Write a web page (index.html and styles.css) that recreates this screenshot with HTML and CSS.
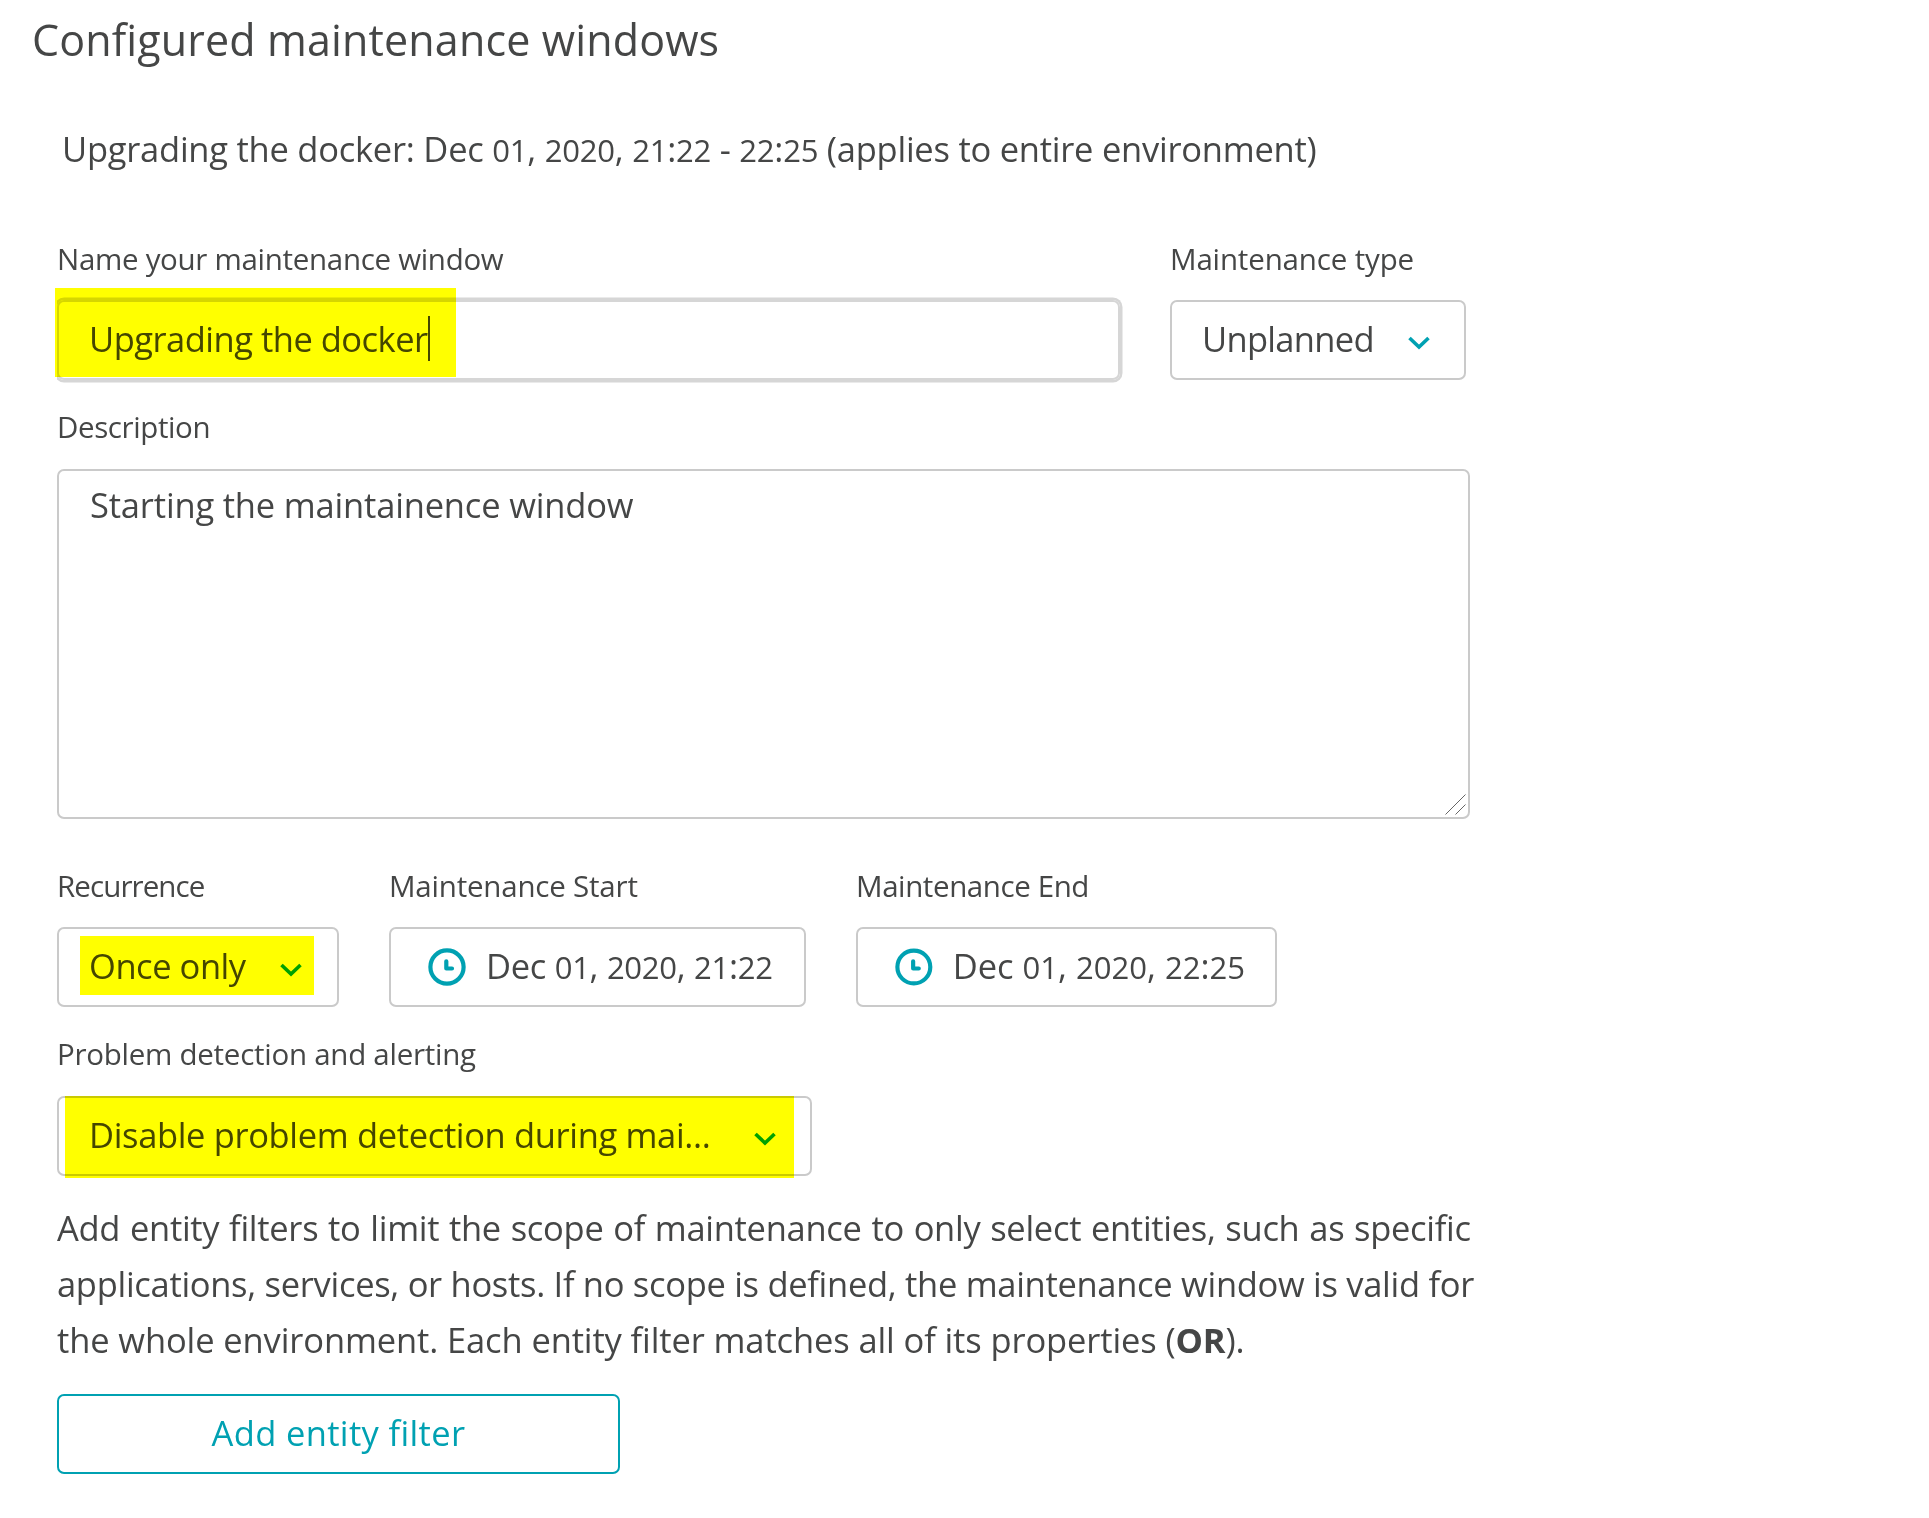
FILE: index.html
```html
<!DOCTYPE html>
<html lang="en">
<head>
<meta charset="utf-8">
<title>Configured maintenance windows</title>
<link rel="stylesheet" href="styles.css">
</head>
<body>
<main class="page">
  <h1 class="title">Configured maintenance windows</h1>
  <p class="summary">Upgrading the docker: Dec <span class="num">01</span>, <span class="num">2020</span>, <span class="num">21</span>:<span class="num">22</span> - <span class="num">22</span>:<span class="num">25</span> (applies to entire environment)</p>

  <form class="form">
    <div class="row row-name">
      <div class="field">
        <div class="label label-name">Name your maintenance window</div>
        <div class="box input-name"><span class="text-name">Upgrading the docker</span><i class="caret"></i><i class="mark mark-name"></i></div>
      </div>
      <div class="field">
        <div class="label label-type">Maintenance type</div>
        <div class="box select-type"><span class="text-type">Unplanned</span>
          <svg class="chevron" viewBox="0 0 22 14"><path d="M1.5 2 11 11 20.500 2"/></svg>
        </div>
      </div>
    </div>

    <div class="field field-description">
      <div class="label label-description">Description</div>
      <div class="box area"><span class="text-description">Starting the maintainence window</span>
        <svg class="grip" viewBox="0 0 22 22"><path d="M.5 20.500 20.500.5M10.500 20.500l10-10"/></svg>
      </div>
    </div>

    <div class="row row-time">
      <div class="field">
        <div class="label label-recurrence">Recurrence</div>
        <div class="box select-recurrence"><span class="text-recurrence">Once only</span>
          <svg class="chevron" viewBox="0 0 22 14"><path d="M1.5 2 11 11 20.500 2"/></svg>
          <i class="mark mark-recurrence"></i>
        </div>
      </div>
      <div class="field">
        <div class="label label-start">Maintenance Start</div>
        <div class="box date-start">
          <svg class="clock" viewBox="0 0 38 38"><circle cx="19" cy="19" r="16.600"/><path d="M18.300 13.300v7.200h5.700"/></svg>
          <span class="text-start">Dec <span class="num">01</span>, <span class="num">2020</span>, <span class="num">21</span>:<span class="num">22</span></span>
        </div>
      </div>
      <div class="field">
        <div class="label label-end">Maintenance End</div>
        <div class="box date-end">
          <svg class="clock" viewBox="0 0 38 38"><circle cx="19" cy="19" r="16.600"/><path d="M18.300 13.300v7.200h5.700"/></svg>
          <span class="text-end">Dec <span class="num">01</span>, <span class="num">2020</span>, <span class="num">22</span>:<span class="num">25</span></span>
        </div>
      </div>
    </div>

    <div class="field field-alerting">
      <div class="label label-alerting">Problem detection and alerting</div>
      <div class="box select-alerting"><span class="text-alerting">Disable problem detection during mai...</span>
        <svg class="chevron" viewBox="0 0 22 14"><path d="M1.5 2 11 11 20.500 2"/></svg>
        <i class="mark mark-alerting"></i>
      </div>
    </div>

    <p class="hint"><span class="line-1">Add entity filters to limit the scope of maintenance to only select entities, such as specific</span><br><span class="line-2">applications, services, or hosts. If no scope is defined, the maintenance window is valid for</span><br><span class="line-3">the whole environment. Each entity filter matches all of its properties (<b>OR</b>).</span></p>
    <div class="box add-filter">Add entity filter</div>
  </form>
</main>
</body>
</html>
```
FILE: styles.css
```css
* { box-sizing: border-box; }

body {
  margin: 0;
  background: #fff;
  color: #454646;
  font-family: "Open Sans", "Noto Sans", sans-serif;
  font-size: 34.5px;
  font-variant-ligatures: none;
  white-space: nowrap;
}

.page { padding: 10px 0 0 30px; }

.title {
  margin: 0 0 0 2px;
  font-size: 43px;
  font-weight: 400;
  line-height: 60px;
  letter-spacing: .14px;
}

.summary {
  margin: 54px 0 0 32px;
  line-height: 50px;
  letter-spacing: -.245px;
}

.num { font-size: .9em; }

.form { margin: 64px 0 0 27px; }
.row { display: flex; }
.row-name { gap: 50px; }
.row-time { gap: 50px; margin-top: 47px; }
.field-description, .field-alerting { margin-top: 27px; }

.label {
  height: 61px;
  font-size: 29.5px;
  line-height: 40px;
}
.label-name { letter-spacing: -.3px; }
.label-type { letter-spacing: -.15px; }
.label-description { height: 62px; letter-spacing: -.4px; }
.label-recurrence { letter-spacing: -.9px; }
.label-start { letter-spacing: -.2px; }
.label-end { letter-spacing: -.4px; }
.label-alerting { height: 62px; letter-spacing: -.26px; }

.box {
  position: relative;
  display: flex;
  align-items: center;
  height: 80px;
  padding: 0 30px 3px;
  border: 2px solid #cacaca;
  border-radius: 7px;
}

.input-name {
  width: 1063px;
  border-color: #d6d6d6;
  box-shadow: 0 0 0 2.500px #d6d6d6;
  clip-path: inset(-12px -3px -3px -2px);
}
.input-name::before {
  content: "";
  position: absolute;
  inset: -5px auto -5px -7px;
  width: 5px;
  background: #fff;
}
.text-name { letter-spacing: -.5px; }
.caret { width: 2px; height: 45px; background: #454646; }

.select-type { width: 296px; justify-content: space-between; padding-right: 34px; }
.text-type { letter-spacing: -.7px; }

.area { width: 1413px; height: 350px; align-items: flex-start; padding: 9px 30px 0 31px; }
.text-description { line-height: 50px; letter-spacing: -.18px; }
.grip {
  position: absolute;
  right: 1px;
  bottom: 1px;
  width: 22px;
  height: 22px;
  fill: none;
  stroke: #666;
  stroke-width: 1;
}

.select-recurrence { width: 282px; justify-content: space-between; padding-right: 35px; }
.text-recurrence { letter-spacing: -.45px; }
.date-start { width: 417px; padding-left: 37px; }
.date-end { width: 421px; padding-left: 37px; }
.text-start { letter-spacing: -.3px; }
.text-end { letter-spacing: 0; }

.select-alerting { width: 755px; justify-content: space-between; padding-right: 34px; }
.text-alerting { letter-spacing: -.35px; }

.chevron {
  width: 22px;
  height: 14px;
  margin-top: 8px;
  fill: none;
  stroke: #00a1b2;
  stroke-width: 3.600;
}

.clock {
  width: 38px;
  height: 38px;
  margin: 2px 20px 0 0;
  fill: none;
  stroke: #00a1b2;
  stroke-width: 4.200;
  stroke-linecap: round;
  stroke-linejoin: round;
}

/* Highlighter strokes tint whatever lies beneath them */
.mark { position: absolute; background: #ff0; mix-blend-mode: multiply; }
.mark-name { left: -4px; top: -14px; width: 401px; height: 89px; }
.mark-recurrence { left: 21px; top: 7px; width: 234px; height: 59px; }
.mark-alerting { left: 6px; top: -2px; width: 729px; height: 82px; }

.hint { margin: 24px 0 0; line-height: 56px; }
.line-1 { letter-spacing: -.29px; word-spacing: 1.1px; }
.line-2 { letter-spacing: -.3px; }
.line-3 { letter-spacing: -.12px; }

.add-filter {
  width: 563px;
  margin-top: 26px;
  justify-content: center;
  border-color: #00a1b2;
  color: #00a1b2;
  letter-spacing: .35px;
}
```
